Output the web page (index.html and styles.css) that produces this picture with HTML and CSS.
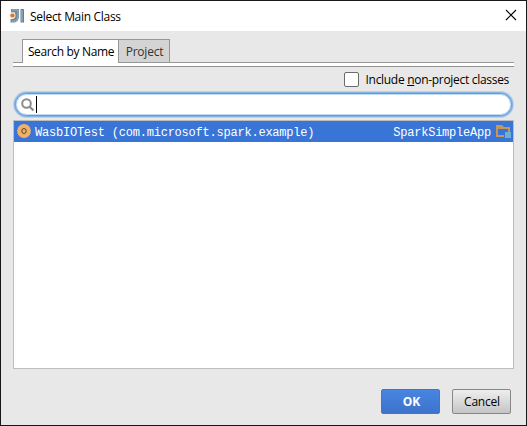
FILE: index.html
```html
<!DOCTYPE html>
<html lang="en">
<head>
<meta charset="utf-8">
<title>Select Main Class</title>
<link rel="stylesheet" href="styles.css">
</head>
<body>
<div class="dialog">
  <header class="titlebar">
    <svg class="logo" width="16" height="16" viewBox="0 0 16 16">
      <path d="M2 1h8v7c0 4-2 6.500-5.500 6.500H1.500v-3.500H3c2 0 3-1 3-3V4.500H2z" fill="#6f8c9e"/>
      <path d="M3 2h6v6c0 3.500-1.500 5.300-4.500 5.300H3" fill="none" stroke="#a5bac6" stroke-width=".8"/>
      <rect x="11.500" y="1" width="3.500" height="13.500" rx=".6" fill="#617f92"/>
      <rect x="12.300" y="2" width="1.300" height="11.500" fill="#9cb4c2"/>
      <circle cx="3.500" cy="7.500" r="3" fill="#f5e3d2"/>
      <circle cx="3.500" cy="7.500" r="2.100" fill="#e27a1c"/>
    </svg>
    <h1 class="title">Select Main Class</h1>
    <svg class="close" width="12" height="12" viewBox="0 0 12 12"><path d="M1 1l10 10M11 1L1 11" stroke="#000" stroke-width="1.100"/></svg>
  </header>
  <nav class="tabs">
    <div class="tab active"><span class="t-search">Search by Name</span></div>
    <div class="tab"><span class="t-project">Project</span></div>
  </nav>
  <div class="strip"></div>
  <label class="option"><span class="checkbox"></span><span class="t-include">Include <u>n</u>on-project classes</span></label>
  <div class="search">
    <svg width="14" height="14" viewBox="0 0 14 14"><circle cx="5.500" cy="5.500" r="4.300" fill="none" stroke="#8c8c8c" stroke-width="2"/><path d="M8.700 8.700l3.800 3.800" stroke="#8c8c8c" stroke-width="2.300"/></svg>
    <span class="caret"></span>
  </div>
  <main class="list">
    <div class="row">
      <svg class="class-icon" width="14" height="14" viewBox="0 0 14 14"><circle cx="7" cy="7" r="6.900" fill="#efb069"/><ellipse cx="7" cy="7" rx="2.200" ry="2.500" fill="none" stroke="#584329" stroke-width="1"/></svg>
      <span class="class-name">WasbIOTest (com.microsoft.spark.example)</span>
      <span class="module">SparkSimpleApp</span>
      <svg class="module-icon" width="16" height="14" viewBox="0 0 16 14"><path d="M0 1h6l2 2h6v5h-2V5H2v6h6v2H0z" fill="#c4985c"/><rect x="9" y="8" width="6" height="6" fill="#6fb0d2"/></svg>
    </div>
  </main>
  <footer class="buttons">
    <button class="btn primary">OK</button>
    <button class="btn"><span class="t-cancel">Cancel</span></button>
  </footer>
</div>
</body>
</html>
```

FILE: styles.css
```css
* { box-sizing: border-box; }
body { margin: 0; font-family: "Open Sans", "Noto Sans", sans-serif; font-size: 12px; color: #000; }
.dialog { width: 527px; height: 426px; border: 1px solid #19171a; background: #e8e8e8; display: flex; flex-direction: column; overflow: hidden; }
.titlebar { height: 30px; flex: none; background: #fff; display: flex; align-items: center; padding: 0 9px 0 8px; }
.logo { flex: none; }
.close { margin-bottom: 2px; }
.title { margin: 0 auto 0 5px; font-size: 12px; font-weight: 400; letter-spacing: -0.3px; white-space: nowrap; }
.tabs { height: 32px; flex: none; margin: 0 12px; padding: 8px 0 0 9px; display: flex; border-bottom: 1px solid #979797; }
.tab { height: 23px; width: 51px; border: 1px solid #979797; border-left: 0; border-bottom: 0; background: #d4d4d4; color: #333; display: flex; align-items: center; justify-content: center; white-space: nowrap; }
.tab.active { width: 97px; height: 24px; border-left: 1px solid #979797; background: #fff; color: #000; }
.strip { height: 4px; flex: none; margin: 0 12px; background: #fff; border-bottom: 1px solid #929292; }
.t-search { letter-spacing: -0.35px; padding-left: 1px; }
.t-project { letter-spacing: -0.2px; padding-left: 1px; }
.t-include { letter-spacing: -0.3px; }
.t-cancel { letter-spacing: -0.2px; padding-left: 1px; }
.option { height: 25px; flex: none; display: flex; align-items: center; justify-content: flex-end; gap: 6px; padding-right: 17px; white-space: nowrap; }
.checkbox { width: 15px; height: 15px; border: 1px solid #6b6b6b; border-radius: 2px; background: #fff; margin-right: 0.5px; }
.option u { text-underline-offset: 1px; }
.search { height: 23px; flex: none; margin: 1px 14px 0; border: 1px solid #5b9ddd; border-radius: 12px; background: #fff; box-shadow: 0 0 0 1px #85b5e4, 0 0 0 2px #bcd3eb, inset 0 0 0 1px #c1dbf3; display: flex; align-items: center; padding-left: 5px; gap: 1px; }
.caret { width: 1px; height: 17px; background: #000; }
.list { height: 249px; flex: none; margin: 4px 12px 0; border: 1px solid #bdbdbd; background: #fff; }
.row { height: 21px; background: #3875d7; color: #fff; font-family: "Liberation Mono", monospace; font-size: 12px; letter-spacing: -0.22px; white-space: nowrap; display: flex; align-items: center; padding: 0 1px 0 3px; }
.class-icon { margin-bottom: 1px; }
.module-icon { flex: none; margin-bottom: 1px; }
.class-name { margin: 2px auto 0 4px; }
.module { margin: 2px 5px 0 0; }
.buttons { display: flex; justify-content: flex-end; gap: 12px; padding: 20px 15px 0 0; }
.btn { width: 59px; height: 25px; padding: 0; border: 1px solid #878787; border-radius: 2px; background: linear-gradient(#eee, #c5c5c5); font: inherit; color: #000; }
.btn.primary { padding-left: 2px; border-color: #5573a5; background: linear-gradient(#4785e1, #3d73cc); color: #fff; font-weight: 700; }
```
